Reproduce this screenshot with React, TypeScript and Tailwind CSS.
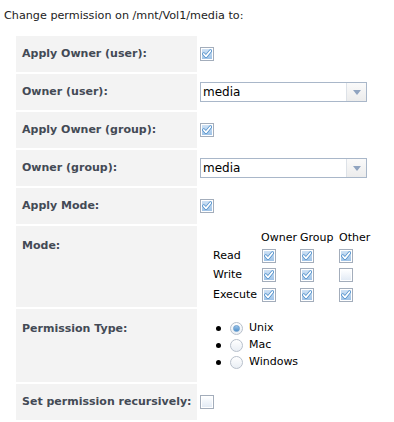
import React from 'react'

function Check({ checked = true }: { checked?: boolean }) {
  return (
    <span className="inline-flex w-[14px] h-[14px] border border-[#a3adbb] bg-white p-px shrink-0">
      <span className={`flex-1 flex items-center justify-center ${checked ? 'bg-gradient-to-b from-[#cfe2f5] to-[#9fc3e7]' : 'bg-gradient-to-b from-[#fdfeff] to-[#e3ebf5]'}`}>
        {checked && (
          <svg width="10" height="10" viewBox="0 0 10 10">
            <path d="M1.8 5 L4 7.4 L8.4 2" fill="none" stroke="#4a8cc8" strokeWidth="3.2" strokeLinecap="round" strokeLinejoin="round" />
            <path d="M1.8 5 L4 7.4 L8.4 2" fill="none" stroke="#ffffff" strokeWidth="1.8" strokeLinecap="round" strokeLinejoin="round" />
          </svg>
        )}
      </span>
    </span>
  )
}

function Radio({ checked = false }: { checked?: boolean }) {
  return (
    <span className="inline-flex w-[13px] h-[13px] rounded-full border border-[#b8c0cb] bg-gradient-to-b from-white to-[#e9eef4] items-center justify-center shrink-0">
      {checked && <span className="w-[7px] h-[7px] rounded-full bg-gradient-to-b from-[#9cc4e8] to-[#4d8fcb] border border-[#6b9fcf]" />}
    </span>
  )
}

function Select({ value }: { value: string }) {
  return (
    <div className="flex w-[167px] h-[20px] border border-[#a9b7c9] bg-white">
      <span className="flex-1 px-[2px] leading-[18px] text-[12px] text-black">{value}</span>
      <span className="w-[20px] border-l border-[#dde2e8] bg-gradient-to-b from-[#fafafa] to-[#ececec] flex items-center justify-center">
        <svg width="8" height="5" viewBox="0 0 8 5"><path d="M0 0 H8 L4 5 Z" fill="#90a4c0" /></svg>
      </span>
    </div>
  )
}

function Row({ label, h, top, children }: { label: string; h: string; top?: boolean; children: React.ReactNode }) {
  return (
    <div className={`flex ${h}`}>
      <div className={`w-[181px] bg-[#f3f3f3] pl-[6px] flex ${top ? 'items-start pt-[12px]' : 'items-center'} font-bold text-[11px] text-[#434a55]`}>
        {label}
      </div>
      <div className={`flex-1 pl-[3px] flex ${top ? 'items-start' : 'items-center'}`}>{children}</div>
    </div>
  )
}

export default function App() {
  const modes: [string, boolean, boolean, boolean][] = [
    ['Read', true, true, true],
    ['Write', true, true, false],
    ['Execute', true, true, true],
  ]
  return (
    <div className="w-[394px] h-[422px] bg-white text-[11px] text-[#222]" style={{ fontFamily: '"DejaVu Sans", Verdana, sans-serif' }}>
      <div className="pl-[4px] pt-[8px] h-[36px] text-[11.2px]">Change permission on /mnt/Vol1/media to:</div>
      <div className="ml-[16px] flex flex-col gap-[2px]">
        <Row label="Apply Owner (user):" h="h-[36px]"><Check /></Row>
        <Row label="Owner (user):" h="h-[36px]"><Select value="media" /></Row>
        <Row label="Apply Owner (group):" h="h-[36px]"><Check /></Row>
        <Row label="Owner (group):" h="h-[36px]"><Select value="media" /></Row>
        <Row label="Apply Mode:" h="h-[36px]"><Check /></Row>
        <Row label="Mode:" h="h-[81px]" top>
          <div className="pl-[13px] pt-[4px] grid grid-cols-[48px_39px_39px_auto] text-black">
            <span />
            <span className="h-[16px] leading-[16px]">Owner</span>
            <span className="h-[16px] leading-[16px]">Group</span>
            <span className="h-[16px] leading-[16px]">Other</span>
            {modes.map(([name, a, b, c]) => (
              <React.Fragment key={name}>
                <span className="h-[19.5px] flex items-center">{name}</span>
                <span className="h-[19.5px] flex items-center pl-px"><Check checked={a} /></span>
                <span className="h-[19.5px] flex items-center"><Check checked={b} /></span>
                <span className="h-[19.5px] flex items-center"><Check checked={c} /></span>
              </React.Fragment>
            ))}
          </div>
        </Row>
        <Row label="Permission Type:" h="h-[73px]" top>
          <ul className="pl-[16px] pt-[11px] flex flex-col text-black">
            {[['Unix', true], ['Mac', false], ['Windows', false]].map(([n, c]) => (
              <li key={n as string} className="h-[17px] flex items-center">
                <span className="w-[5px] h-[5px] rounded-full bg-black mr-[9px]" />
                <Radio checked={c as boolean} />
                <span className="ml-[6px]">{n as string}</span>
              </li>
            ))}
          </ul>
        </Row>
        <Row label="Set permission recursively:" h="h-[36px]"><Check checked={false} /></Row>
      </div>
    </div>
  )
}
